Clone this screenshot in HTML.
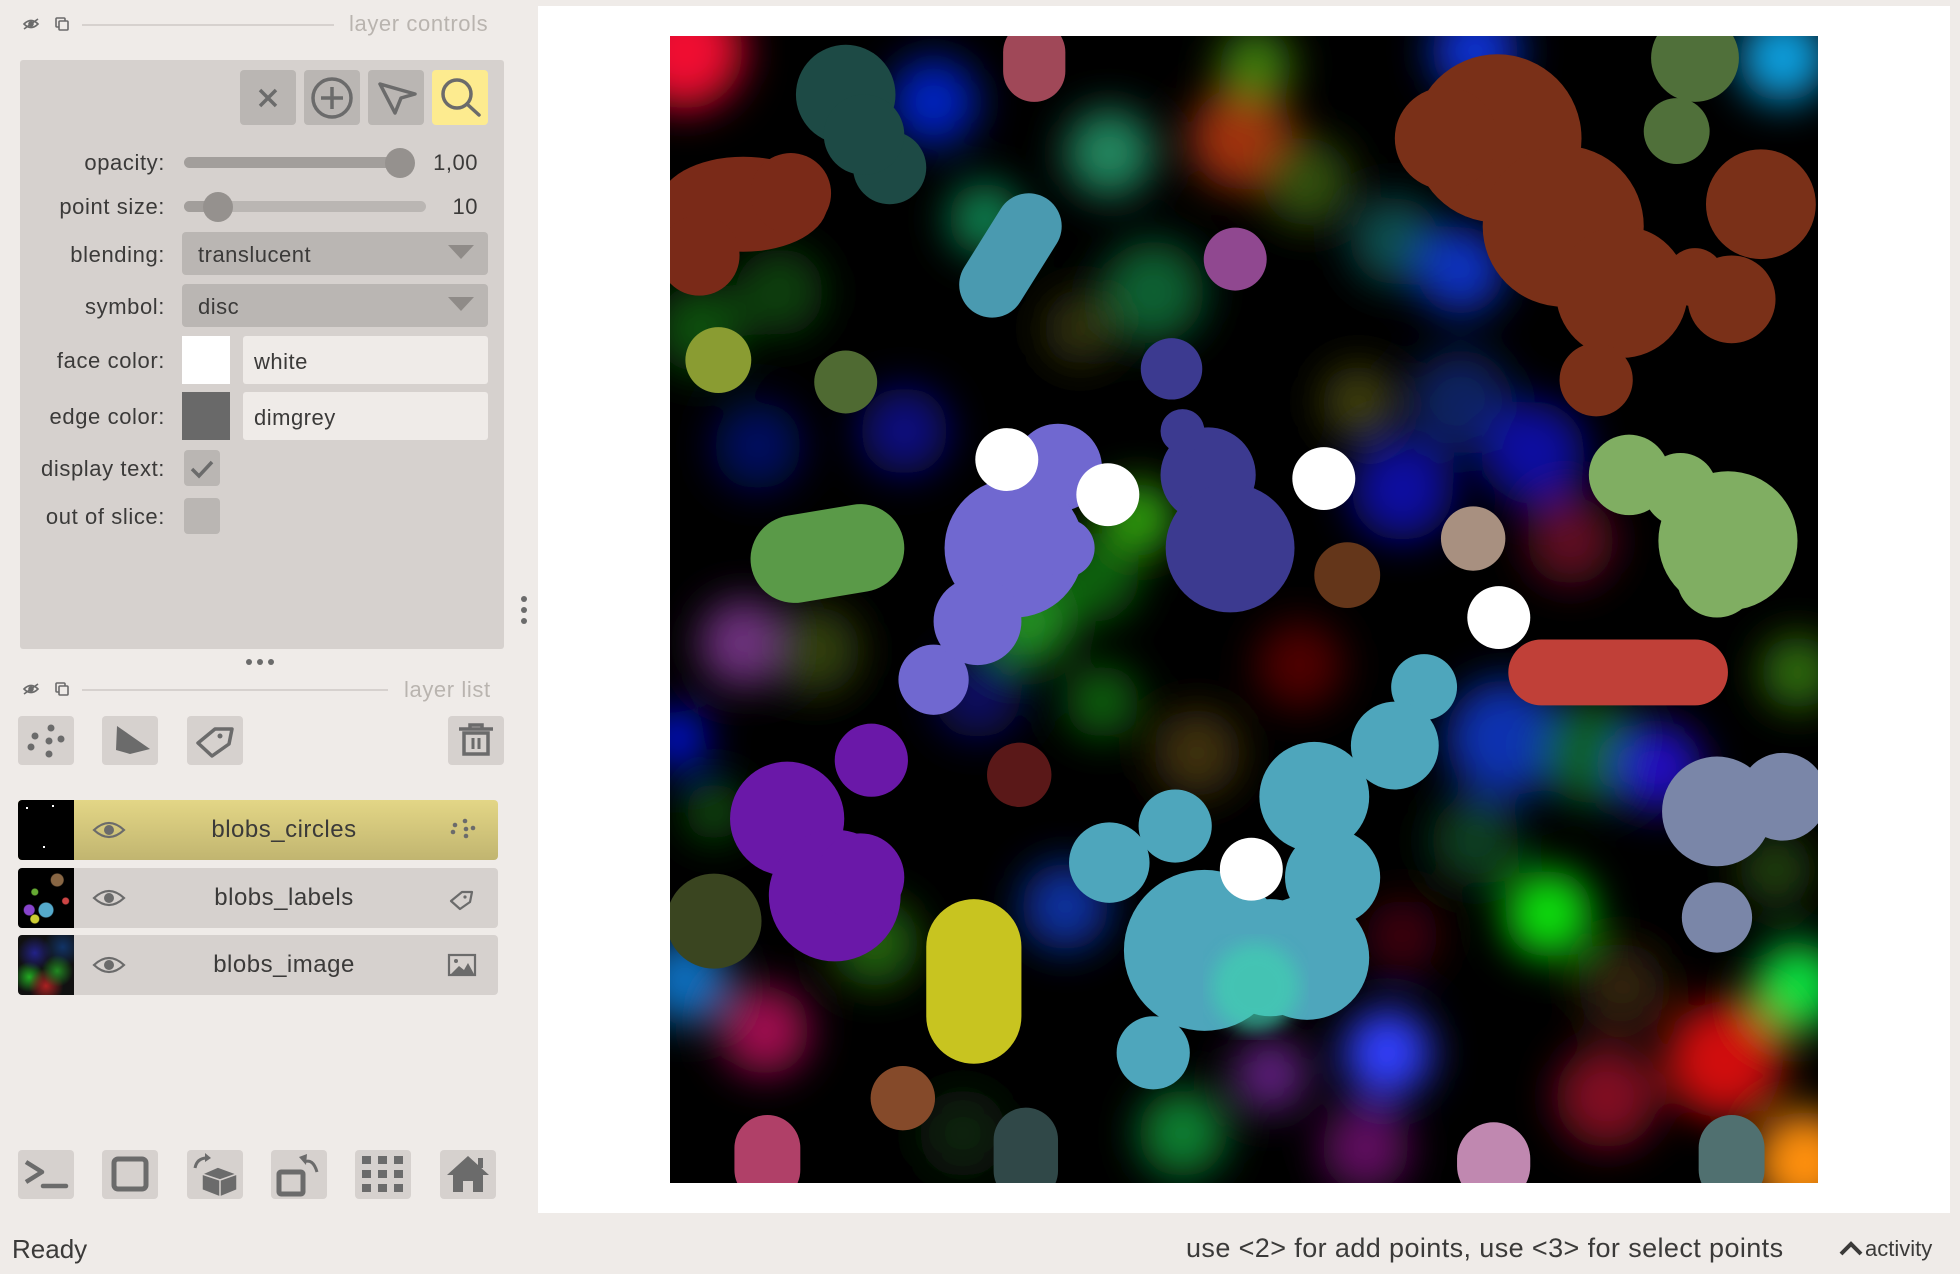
<!DOCTYPE html>
<html><head><meta charset="utf-8">
<style>
*{margin:0;padding:0;box-sizing:border-box}
body{width:1960px;height:1274px;background:#efebe8;font-family:"Liberation Sans",sans-serif;color:#3b3a39;position:relative;overflow:hidden}
.abs{position:absolute}
.btn{position:absolute;background:#d6d1ce;border-radius:4px}
.lbl{position:absolute;right:1795px;font-size:22px;letter-spacing:0.6px;color:#3b3a39;text-align:right;white-space:nowrap;transform:translateY(-50%)}
.hdr{position:absolute;font-size:22px;letter-spacing:0.6px;color:#b9b4af}
.layer{position:absolute;left:18px;width:480px;height:60px;background:#d6d1ce;border-radius:4px;overflow:hidden}
.layer .name{position:absolute;left:74px;right:0;top:0;line-height:60px;text-align:center;font-size:24px;letter-spacing:0.5px;padding-right:22px}
.thumb{position:absolute;left:0;top:0;width:56px;height:60px;background:#000}
.v{font-size:22px;letter-spacing:0.5px}
</style></head><body>

<!-- layer controls header -->
<svg class="abs" style="left:20px;top:15px" width="60" height="18" viewBox="0 0 60 18">
<path d="M4 9 Q11 2 18 9 Q11 16 4 9Z" fill="none" stroke="#6b6b6b" stroke-width="1.6"/><circle cx="11" cy="9" r="2.8" fill="#6b6b6b"/><line x1="4" y1="14" x2="18" y2="4" stroke="#6b6b6b" stroke-width="1.6"/>
<rect x="36" y="3" width="9" height="9" fill="none" stroke="#6b6b6b" stroke-width="1.6" rx="1"/><rect x="39" y="6" width="9" height="9" fill="#efebe8" stroke="#6b6b6b" stroke-width="1.6" rx="1"/>
</svg>
<div class="abs" style="left:82px;top:24px;width:252px;height:2px;background:#d6d1ce"></div>
<div class="hdr" style="left:349px;top:11px">layer controls</div>

<div class="abs" style="left:20px;top:60px;width:484px;height:589px;background:#d6d1ce;border-radius:3px"></div>

<!-- tool buttons -->
<div class="btn" style="left:240px;top:70px;width:56px;height:55px;background:#bab6b3"></div>
<svg class="abs" style="left:240px;top:70px" width="56" height="55"><path d="M20 20L36 36M36 20L20 36" stroke="#6b6b6b" stroke-width="3.5"/></svg>
<div class="btn" style="left:304px;top:70px;width:56px;height:55px;background:#bab6b3"></div>
<svg class="abs" style="left:304px;top:70px" width="56" height="55"><circle cx="28" cy="28" r="19" fill="none" stroke="#6b6b6b" stroke-width="3.5"/><path d="M28 17V39M17 28H39" stroke="#6b6b6b" stroke-width="3.5"/></svg>
<div class="btn" style="left:368px;top:70px;width:56px;height:55px;background:#bab6b3"></div>
<svg class="abs" style="left:368px;top:70px" width="56" height="55"><path d="M12 14L47 24L33 28L27 43Z" fill="none" stroke="#6b6b6b" stroke-width="3.5" stroke-linejoin="round"/></svg>
<div class="btn" style="left:432px;top:70px;width:56px;height:55px;background:#fdeb8f"></div>
<svg class="abs" style="left:432px;top:70px" width="56" height="55"><circle cx="25" cy="24" r="14" fill="none" stroke="#6b6b6b" stroke-width="3.5"/><path d="M35 34L47 45" stroke="#6b6b6b" stroke-width="3.5" stroke-linecap="round"/></svg>

<!-- opacity -->
<div class="lbl" style="top:163px">opacity:</div>
<div class="abs" style="left:184px;top:157px;width:230px;height:11px;background:#a29e9b;border-radius:6px"></div>
<div class="abs" style="left:385px;top:148px;width:30px;height:30px;background:#95918e;border-radius:50%"></div>
<div class="abs v" style="left:410px;top:150px;width:68px;text-align:right">1,00</div>
<!-- point size -->
<div class="lbl" style="top:207px">point size:</div>
<div class="abs" style="left:184px;top:201px;width:242px;height:11px;background:#bab6b3;border-radius:6px"></div>
<div class="abs" style="left:184px;top:201px;width:34px;height:11px;background:#a29e9b;border-radius:6px"></div>
<div class="abs" style="left:203px;top:192px;width:30px;height:30px;background:#95918e;border-radius:50%"></div>
<div class="abs v" style="left:420px;top:194px;width:58px;text-align:right">10</div>
<!-- blending -->
<div class="lbl" style="top:255px">blending:</div>
<div class="abs" style="left:182px;top:232px;width:306px;height:43px;background:#bab6b3;border-radius:4px"></div>
<div class="abs v" style="left:198px;top:242px">translucent</div>
<svg class="abs" style="left:448px;top:245px" width="28" height="16"><path d="M0 0H26L13 14Z" fill="#8f8b88"/></svg>
<!-- symbol -->
<div class="lbl" style="top:307px">symbol:</div>
<div class="abs" style="left:182px;top:284px;width:306px;height:43px;background:#bab6b3;border-radius:4px"></div>
<div class="abs v" style="left:198px;top:294px">disc</div>
<svg class="abs" style="left:448px;top:297px" width="28" height="16"><path d="M0 0H26L13 14Z" fill="#8f8b88"/></svg>
<!-- face color -->
<div class="lbl" style="top:361px">face color:</div>
<div class="abs" style="left:182px;top:336px;width:48px;height:48px;background:#fff"></div>
<div class="abs" style="left:243px;top:336px;width:245px;height:48px;background:#efebe8;border-radius:3px"></div>
<div class="abs v" style="left:254px;top:349px">white</div>
<!-- edge color -->
<div class="lbl" style="top:417px">edge color:</div>
<div class="abs" style="left:182px;top:392px;width:48px;height:48px;background:#696969"></div>
<div class="abs" style="left:243px;top:392px;width:245px;height:48px;background:#efebe8;border-radius:3px"></div>
<div class="abs v" style="left:254px;top:405px">dimgrey</div>
<!-- display text -->
<div class="lbl" style="top:469px">display text:</div>
<div class="abs" style="left:184px;top:450px;width:36px;height:36px;background:#bab6b3;border-radius:4px"></div>
<svg class="abs" style="left:184px;top:450px" width="36" height="36"><path d="M8 19L15 26L28 12" fill="none" stroke="#6b6b6b" stroke-width="3.5"/></svg>
<!-- out of slice -->
<div class="lbl" style="top:517px">out of slice:</div>
<div class="abs" style="left:184px;top:498px;width:36px;height:36px;background:#bab6b3;border-radius:4px"></div>

<!-- splitter dots -->
<svg class="abs" style="left:244px;top:657px" width="32" height="10"><circle cx="5" cy="5" r="3" fill="#6b6b6b"/><circle cx="16" cy="5" r="3" fill="#6b6b6b"/><circle cx="27" cy="5" r="3" fill="#6b6b6b"/></svg>
<svg class="abs" style="left:519px;top:594px" width="10" height="32"><circle cx="5" cy="5" r="3" fill="#6b6b6b"/><circle cx="5" cy="16" r="3" fill="#6b6b6b"/><circle cx="5" cy="27" r="3" fill="#6b6b6b"/></svg>

<!-- layer list header -->
<svg class="abs" style="left:20px;top:680px" width="60" height="18" viewBox="0 0 60 18">
<path d="M4 9 Q11 2 18 9 Q11 16 4 9Z" fill="none" stroke="#6b6b6b" stroke-width="1.6"/><circle cx="11" cy="9" r="2.8" fill="#6b6b6b"/><line x1="4" y1="14" x2="18" y2="4" stroke="#6b6b6b" stroke-width="1.6"/>
<rect x="36" y="3" width="9" height="9" fill="none" stroke="#6b6b6b" stroke-width="1.6" rx="1"/><rect x="39" y="6" width="9" height="9" fill="#efebe8" stroke="#6b6b6b" stroke-width="1.6" rx="1"/>
</svg>
<div class="abs" style="left:82px;top:689px;width:306px;height:2px;background:#d6d1ce"></div>
<div class="hdr" style="left:404px;top:677px">layer list</div>

<!-- layer buttons -->
<div class="btn" style="left:18px;top:716px;width:56px;height:49px"></div>
<svg class="abs" style="left:18px;top:716px" width="56" height="49"><g fill="#6b6b6b"><circle cx="33" cy="12" r="3.5"/><circle cx="17" cy="20" r="3.5"/><circle cx="31" cy="25" r="3.5"/><circle cx="43" cy="23" r="3.5"/><circle cx="13" cy="31" r="3.5"/><circle cx="31" cy="38" r="3.5"/></g></svg>
<div class="btn" style="left:102px;top:716px;width:56px;height:49px"></div>
<svg class="abs" style="left:102px;top:716px" width="56" height="49"><path d="M15 10L48 33L28 38L14 34Z" fill="#6b6b6b"/></svg>
<div class="btn" style="left:187px;top:716px;width:56px;height:49px"></div>
<svg class="abs" style="left:187px;top:716px" width="56" height="49"><path d="M11 27L28 13L45 13L42 28L25 40Z" fill="none" stroke="#6b6b6b" stroke-width="3.5" stroke-linejoin="round"/><circle cx="33" cy="20" r="2.5" fill="#6b6b6b"/></svg>
<div class="btn" style="left:448px;top:716px;width:56px;height:49px"></div>
<svg class="abs" style="left:448px;top:716px" width="56" height="49"><path d="M11 13H45M22 13V9H34V13" fill="none" stroke="#6b6b6b" stroke-width="3.5"/><rect x="16" y="17" width="24" height="21" fill="none" stroke="#6b6b6b" stroke-width="3.5"/><path d="M25 22V33M31 22V33" stroke="#6b6b6b" stroke-width="3"/></svg>

<!-- layers -->
<div class="layer" style="top:800px;background:linear-gradient(#e3d686,#c1b570)">
 <div class="thumb"><i class="abs" style="left:8px;top:7px;width:2px;height:2px;background:#fff"></i><i class="abs" style="left:34px;top:5px;width:2px;height:2px;background:#fff"></i><i class="abs" style="left:25px;top:46px;width:2px;height:2px;background:#fff"></i></div>
 <div class="name">blobs_circles</div>
</div>
<div class="layer" style="top:868px">
 <div class="thumb" style="background:radial-gradient(circle at 30% 40%,#6a3 0 3px,transparent 4px),radial-gradient(circle at 70% 20%,#864 0 6px,transparent 7px),radial-gradient(circle at 50% 70%,#5ac 0 7px,transparent 8px),radial-gradient(circle at 20% 70%,#84c 0 5px,transparent 6px),radial-gradient(circle at 30% 85%,#cc3 0 4px,transparent 5px),radial-gradient(circle at 85% 55%,#c44 0 3px,transparent 4px),#000"></div>
 <div class="name">blobs_labels</div>
</div>
<div class="layer" style="top:935px">
 <div class="thumb" style="background:radial-gradient(circle at 30% 30%,#228 0,transparent 30%),radial-gradient(circle at 70% 60%,#282 0,transparent 30%),radial-gradient(circle at 50% 85%,#a22 0,transparent 30%),radial-gradient(circle at 80% 20%,#136 0,transparent 30%),radial-gradient(circle at 20% 70%,#2a2 0,transparent 25%),#111"></div>
 <div class="name">blobs_image</div>
</div>
<svg class="abs" style="left:0;top:800px" width="520" height="200">
<g fill="#6b6b6b">
<path d="M94 30 Q109 16 124 30 Q109 44 94 30Z" fill="none" stroke="#6b6b6b" stroke-width="2.2"/><circle cx="109" cy="30" r="5"/>
<path d="M94 98 Q109 84 124 98 Q109 112 94 98Z" fill="none" stroke="#6b6b6b" stroke-width="2.2"/><circle cx="109" cy="98" r="5"/>
<path d="M94 165 Q109 151 124 165 Q109 179 94 165Z" fill="none" stroke="#6b6b6b" stroke-width="2.2"/><circle cx="109" cy="165" r="5"/>
<circle cx="465" cy="21" r="2.3"/><circle cx="455" cy="25" r="2.3"/><circle cx="466" cy="29" r="2.3"/><circle cx="473" cy="28" r="2.3"/><circle cx="453" cy="32" r="2.3"/><circle cx="466" cy="36" r="2.3"/>
</g>
<path d="M451 101L462 92L472 92L470 102L460 109Z" fill="none" stroke="#6b6b6b" stroke-width="2.2" stroke-linejoin="round"/><circle cx="465" cy="97" r="1.6" fill="#6b6b6b"/>
<rect x="449" y="155" width="26" height="20" fill="none" stroke="#6b6b6b" stroke-width="2.2"/><path d="M451 174L459 166L464 170L468 163L474 174Z" fill="#6b6b6b"/><circle cx="456" cy="161" r="2" fill="#6b6b6b"/>
</svg>

<!-- bottom buttons -->
<div class="btn" style="left:18px;top:1150px;width:56px;height:49px"></div>
<svg class="abs" style="left:18px;top:1150px" width="56" height="49"><path d="M8 12L24 22L8 32" fill="none" stroke="#6b6b6b" stroke-width="4.5" stroke-linejoin="round"/><path d="M25 36H48" stroke="#6b6b6b" stroke-width="4.5" stroke-linecap="round"/></svg>
<div class="btn" style="left:102px;top:1150px;width:56px;height:49px"></div>
<svg class="abs" style="left:102px;top:1150px" width="56" height="49"><rect x="12" y="9" width="32" height="30" rx="4" fill="none" stroke="#6b6b6b" stroke-width="5"/></svg>
<div class="btn" style="left:187px;top:1150px;width:56px;height:49px"></div>
<svg class="abs" style="left:187px;top:1150px" width="56" height="49"><path d="M15 24L31 17L50 24L33 30Z M15 24V40L33 47V30Z M33 30L50 24V40L33 47" fill="#6b6b6b" stroke="#d6d1ce" stroke-width="1.5"/><path d="M8 18Q10 8 20 8" fill="none" stroke="#6b6b6b" stroke-width="3"/><path d="M18 3L24 8L18 12Z" fill="#6b6b6b"/></svg>
<div class="btn" style="left:271px;top:1150px;width:56px;height:49px"></div>
<svg class="abs" style="left:271px;top:1150px" width="56" height="49"><rect x="8" y="22" width="24" height="22" rx="2" fill="none" stroke="#6b6b6b" stroke-width="5"/><path d="M33 12Q42 8 46 22" fill="none" stroke="#6b6b6b" stroke-width="3"/><path d="M28 7L36 4L35 15Z" fill="#6b6b6b"/></svg>
<div class="btn" style="left:355px;top:1150px;width:56px;height:49px"></div>
<svg class="abs" style="left:355px;top:1150px" width="56" height="49"><g fill="#6b6b6b"><rect x="7" y="6" width="9" height="8"/><rect x="23" y="6" width="9" height="8"/><rect x="39" y="6" width="9" height="8"/><rect x="7" y="20" width="9" height="8"/><rect x="23" y="20" width="9" height="8"/><rect x="39" y="20" width="9" height="8"/><rect x="7" y="34" width="9" height="8"/><rect x="23" y="34" width="9" height="8"/><rect x="39" y="34" width="9" height="8"/></g></svg>
<div class="btn" style="left:440px;top:1150px;width:56px;height:49px"></div>
<svg class="abs" style="left:440px;top:1150px" width="56" height="49"><path d="M7 25L28 6L49 25H43V42H33V31H23V42H13V25Z" fill="#6b6b6b"/><rect x="38" y="8" width="5" height="10" fill="#6b6b6b"/></svg>

<!-- status -->
<div class="abs" style="left:12px;top:1234px;font-size:26px;color:#3b3a39">Ready</div>
<div class="abs" style="left:1186px;top:1233px;font-size:27px;letter-spacing:0.4px;color:#3b3a39;white-space:nowrap">use &lt;2&gt; for add points, use &lt;3&gt; for select points</div>
<svg class="abs" style="left:1838px;top:1238px" width="28" height="20"><path d="M3 16L13 6L23 16" fill="none" stroke="#3b3a39" stroke-width="4"/></svg>
<div class="abs" style="left:1865px;top:1236px;font-size:22px;color:#3b3a39">activity</div>

<!-- canvas -->
<div class="abs" style="left:538px;top:6px;width:1412px;height:1207px;background:#fff"></div>
<svg class="abs" style="left:670px;top:36px" width="1148" height="1147" viewBox="0 0 1568 1568" preserveAspectRatio="none">
<defs>
<filter id="b" x="-20%" y="-20%" width="140%" height="140%"><feGaussianBlur stdDeviation="28"/></filter>
<filter id="b2"><feGaussianBlur stdDeviation="12"/></filter>
<clipPath id="c"><rect width="1568" height="1568"/></clipPath>
</defs>
<g clip-path="url(#c)">
<rect width="1568" height="1568" fill="#000"/>
<g filter="url(#b)">
<circle cx="20" cy="20" r="80" fill="#f01030"/>
<circle cx="360" cy="90" r="60" fill="#0020c0"/>
<circle cx="600" cy="160" r="60" fill="#208860"/>
<circle cx="780" cy="140" r="70" fill="#a03010"/>
<circle cx="870" cy="200" r="60" fill="#305010"/>
<circle cx="800" cy="40" r="50" fill="#408010"/>
<circle cx="1100" cy="20" r="60" fill="#1030d0"/>
<circle cx="1520" cy="30" r="60" fill="#10a0e0"/>
<circle cx="990" cy="280" r="60" fill="#105050"/>
<circle cx="1080" cy="320" r="60" fill="#1030c0"/>
<circle cx="430" cy="250" r="50" fill="#108050"/>
<circle cx="150" cy="350" r="60" fill="#104010"/>
<circle cx="40" cy="400" r="60" fill="#105010"/>
<circle cx="660" cy="350" r="70" fill="#106030"/>
<circle cx="560" cy="400" r="50" fill="#303010"/>
<circle cx="120" cy="560" r="60" fill="#000c60"/>
<circle cx="320" cy="540" r="60" fill="#101080"/>
<circle cx="940" cy="500" r="50" fill="#404010"/>
<circle cx="1080" cy="500" r="70" fill="#102060"/>
<circle cx="1000" cy="620" r="70" fill="#1010a0"/>
<circle cx="1180" cy="570" r="70" fill="#1010a0"/>
<circle cx="1230" cy="690" r="60" fill="#601020"/>
<circle cx="640" cy="660" r="50" fill="#30a010"/>
<circle cx="490" cy="800" r="60" fill="#209020"/>
<circle cx="580" cy="740" r="60" fill="#106010"/>
<circle cx="100" cy="830" r="60" fill="#703080"/>
<circle cx="200" cy="840" r="60" fill="#304010"/>
<circle cx="860" cy="860" r="60" fill="#500000"/>
<circle cx="590" cy="910" r="50" fill="#106010"/>
<circle cx="10" cy="960" r="40" fill="#0010e0"/>
<circle cx="420" cy="900" r="60" fill="#101060"/>
<circle cx="720" cy="980" r="60" fill="#403010"/>
<circle cx="1140" cy="960" r="80" fill="#1030b0"/>
<circle cx="1260" cy="980" r="70" fill="#106020"/>
<circle cx="1540" cy="870" r="50" fill="#307010"/>
<circle cx="1350" cy="1000" r="60" fill="#2010c0"/>
<circle cx="1100" cy="1100" r="60" fill="#104020"/>
<circle cx="1200" cy="1200" r="60" fill="#10e010"/>
<circle cx="1300" cy="1300" r="60" fill="#302010"/>
<circle cx="1540" cy="1300" r="60" fill="#10e040"/>
<circle cx="1510" cy="1140" r="50" fill="#204010"/>
<circle cx="20" cy="1290" r="60" fill="#1070c0"/>
<circle cx="130" cy="1360" r="60" fill="#a01050"/>
<circle cx="280" cy="1240" r="60" fill="#206010"/>
<circle cx="540" cy="1190" r="60" fill="#1030a0"/>
<circle cx="980" cy="1390" r="60" fill="#3040ff"/>
<circle cx="820" cy="1420" r="50" fill="#602080"/>
<circle cx="700" cy="1500" r="60" fill="#108030"/>
<circle cx="400" cy="1500" r="60" fill="#102010"/>
<circle cx="1280" cy="1450" r="70" fill="#801020"/>
<circle cx="1440" cy="1400" r="80" fill="#d01010"/>
<circle cx="1550" cy="1540" r="70" fill="#ff9010"/>
<circle cx="950" cy="1520" r="60" fill="#601060"/>
<circle cx="1000" cy="1230" r="50" fill="#400010"/>
<circle cx="60" cy="1060" r="40" fill="#105010"/>
</g>
<g fill="#1d4a45"><circle cx="240" cy="80" r="68"/><circle cx="300" cy="180" r="50"/><circle cx="265" cy="135" r="55"/></g>
<g fill="#7a2a18"><ellipse cx="100" cy="230" rx="115" ry="65"/><circle cx="40" cy="300" r="55"/><circle cx="165" cy="215" r="55"/></g>
<rect x="455" y="-20" width="85" height="110" rx="42" fill="#a04858"/>
<path d="M490 260L440 340" stroke="#4a9ab0" stroke-width="90" stroke-linecap="round"/>
<circle cx="772" cy="305" r="43" fill="#904890"/>
<circle cx="66" cy="443" r="45" fill="#8a9c32"/>
<circle cx="240" cy="473" r="43" fill="#4f6a32"/>
<g fill="#3c3a90"><circle cx="685" cy="455" r="42"/><circle cx="735" cy="600" r="65"/><circle cx="765" cy="700" r="88"/><circle cx="700" cy="540" r="30"/></g>
<g fill="#7068d0"><circle cx="530" cy="590" r="60"/><circle cx="470" cy="700" r="95"/><circle cx="360" cy="880" r="48"/><circle cx="420" cy="800" r="60"/><circle cx="540" cy="700" r="40"/></g>
<path d="M170 715L260 700" stroke="#5a9a48" stroke-width="120" stroke-linecap="round"/>
<circle cx="925" cy="737" r="45" fill="#64361a"/>
<circle cx="1097" cy="687" r="44" fill="#a89080"/>
<g fill="#7a3018"><circle cx="1130" cy="140" r="115"/><circle cx="1060" cy="140" r="70"/><circle cx="1220" cy="260" r="110"/><circle cx="1300" cy="350" r="90"/><circle cx="1450" cy="360" r="60"/><circle cx="1490" cy="230" r="75"/><circle cx="1265" cy="470" r="50"/><circle cx="1400" cy="330" r="40"/></g>
<g fill="#50703a"><circle cx="1375" cy="130" r="45"/><circle cx="1400" cy="30" r="60"/></g>
<g fill="#80ae62"><circle cx="1310" cy="600" r="55"/><circle cx="1445" cy="690" r="95"/><circle cx="1430" cy="740" r="55"/><circle cx="1380" cy="620" r="50"/></g>
<path d="M1190 870L1400 870" stroke="#c04038" stroke-width="90" stroke-linecap="round"/>
<g fill="#4ea6bc"><circle cx="1030" cy="890" r="45"/><circle cx="990" cy="970" r="60"/><circle cx="880" cy="1040" r="75"/><circle cx="905" cy="1150" r="65"/><circle cx="690" cy="1080" r="50"/><circle cx="600" cy="1130" r="55"/><circle cx="730" cy="1250" r="110"/><circle cx="870" cy="1260" r="85"/><circle cx="660" cy="1390" r="50"/><circle cx="820" cy="1260" r="80"/></g>
<circle cx="800" cy="1300" r="60" fill="#40d0b0" filter="url(#b2)" opacity="0.7"/>
<g fill="#6a18a8"><circle cx="275" cy="990" r="50"/><circle cx="160" cy="1070" r="78"/><circle cx="225" cy="1175" r="90"/><circle cx="260" cy="1150" r="60"/></g>
<circle cx="477" cy="1010" r="44" fill="#5a1818"/>
<rect x="350" y="1180" width="130" height="225" rx="65" fill="#c8c420"/>
<g fill="#7a86a8"><circle cx="1430" cy="1060" r="75"/><circle cx="1520" cy="1040" r="60"/><circle cx="1430" cy="1205" r="48"/></g>
<circle cx="60" cy="1210" r="65" fill="#3a4520"/>
<circle cx="318" cy="1452" r="44" fill="#854a2a"/>
<rect x="88" y="1475" width="90" height="120" rx="45" fill="#b04068"/>
<rect x="442" y="1465" width="88" height="130" rx="44" fill="#304848"/>
<rect x="1075" y="1485" width="100" height="110" rx="50" fill="#c088b0"/>
<rect x="1405" y="1475" width="90" height="120" rx="45" fill="#507070"/>
<g fill="#fff"><circle cx="460" cy="579" r="43"/><circle cx="598" cy="627" r="43"/><circle cx="893" cy="605" r="43"/><circle cx="1132" cy="795" r="43"/><circle cx="794" cy="1139" r="43"/></g>
</g>
</svg>
</body></html>
